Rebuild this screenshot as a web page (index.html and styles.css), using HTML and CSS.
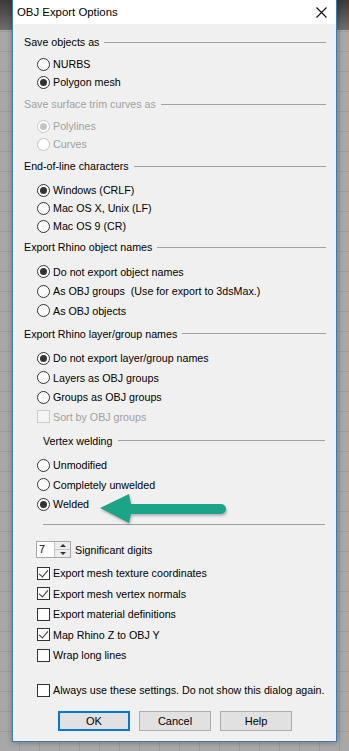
FILE: index.html
```html
<!DOCTYPE html>
<html>
<head>
    <meta charset="utf-8">
    <link rel="stylesheet" href="styles.css">
</head>
<body>
    <div class="dialog">
        <div class="titlebar">
            <span class="title">OBJ Export Options</span>
            <svg class="close-icon" width="11" height="11" viewBox="0 0 11 11">
                <path d="M0.5 0.5 L10.5 10.5 M10.5 0.5 L0.5 10.5" stroke="#111" stroke-width="1.1" fill="none"/>
            </svg>
        </div>

        <div class="dialog-body">
            <div class="group-head">Save objects as</div>
            <div class="options">
                <label class="opt"><span class="radio"></span>NURBS</label>
                <label class="opt"><span class="radio checked"></span>Polygon mesh</label>
            </div>

            <div class="group-head disabled">Save surface trim curves as</div>
            <div class="options">
                <label class="opt disabled"><span class="radio checked"></span>Polylines</label>
                <label class="opt disabled"><span class="radio"></span>Curves</label>
            </div>

            <div class="group-head">End-of-line characters</div>
            <div class="options options-eol">
                <label class="opt"><span class="radio checked"></span>Windows (CRLF)</label>
                <label class="opt"><span class="radio"></span>Mac OS X, Unix (LF)</label>
                <label class="opt"><span class="radio"></span>Mac OS 9 (CR)</label>
            </div>

            <div class="group-head">Export Rhino object names</div>
            <div class="options loose">
                <label class="opt"><span class="radio checked"></span>Do not export object names</label>
                <label class="opt"><span class="radio"></span>As OBJ groups&nbsp; (Use for export to 3dsMax.)</label>
                <label class="opt"><span class="radio"></span>As OBJ objects</label>
            </div>

            <div class="group-head">Export Rhino layer/group names</div>
            <div class="options loose options-layer">
                <label class="opt"><span class="radio checked"></span>Do not export layer/group names</label>
                <label class="opt"><span class="radio"></span>Layers as OBJ groups</label>
                <label class="opt"><span class="radio"></span>Groups as OBJ groups</label>
                <label class="opt disabled"><span class="check"></span>Sort by OBJ groups</label>
            </div>

            <div class="group-head sub">Vertex welding</div>
            <div class="options loose">
                <label class="opt"><span class="radio"></span>Unmodified</label>
                <label class="opt"><span class="radio"></span>Completely unwelded</label>
                <label class="opt"><span class="radio checked"></span>Welded</label>
            </div>

            <div class="separator"></div>

            <div class="spin-row">
                <div class="spin">
                    <span class="spin-value">7</span>
                    <span class="spin-btns">
                        <span class="spin-up"></span>
                        <span class="spin-down"></span>
                    </span>
                </div>
                <span>Significant digits</span>
            </div>

            <div class="checks">
                <label class="opt"><span class="check on"></span>Export mesh texture coordinates</label>
                <label class="opt"><span class="check on"></span>Export mesh vertex normals</label>
                <label class="opt"><span class="check"></span>Export material definitions</label>
                <label class="opt"><span class="check on"></span>Map Rhino Z to OBJ Y</label>
                <label class="opt"><span class="check"></span>Wrap long lines</label>
            </div>

            <label class="opt always"><span class="check"></span>Always use these settings. Do not show this dialog again.</label>

            <div class="buttons">
                <button class="btn default">OK</button>
                <button class="btn">Cancel</button>
                <button class="btn">Help</button>
            </div>
        </div>

        <!-- annotation arrow pointing at "Welded" -->
        <svg class="arrow" width="130" height="34" viewBox="0 0 130 34">
            <path d="M1 16 L30 2 L32 12 H122 A5 5 0 0 1 122 22 H32 L30 31 Z" fill="#1ba485"/>
        </svg>
    </div>
</body>
</html>
```

FILE: styles.css
```css
body {
    margin: 0;
    height: 751px;
    overflow: hidden;
    font-family: "Liberation Sans", Arial, sans-serif;
    font-size: 10.7px;
    color: #000;
    background:
        linear-gradient(#3a3a3a, #6e6e6e) 0 0 / 100% 30px no-repeat,
        repeating-linear-gradient(90deg, transparent 0 19px, rgba(0,0,0,0.08) 19px 20px),
        repeating-linear-gradient(0deg, transparent 0 19px, rgba(0,0,0,0.08) 19px 20px),
        #a8a8a8;
}

.dialog {
    position: relative;
    margin-left: 12px;
    width: 323px;
    height: 741px;
    display: flex;
    flex-direction: column;
    border: 1px solid #3b7cb5;
    border-top: none;
    box-shadow: 0 0 6px rgba(0,0,0,0.35);
}

.titlebar {
    height: 24px;
    background: #fff;
    display: flex;
    align-items: center;
    justify-content: space-between;
    padding: 0 9px 0 4px;
}

.title {
    font-size: 11.4px;
}

.close-icon {
    display: block;
}

.dialog-body {
    flex: 1;
    background: #f0f0f0;
    padding: 10px 10px 0 11px;
}

/* Group headers with the etched line */

.group-head {
    height: 16px;
    display: flex;
    align-items: center;
    gap: 5px;
    white-space: nowrap;
}

.group-head::after {
    content: "";
    flex: 1;
    border-top: 1px solid #a0a0a0;
}

.group-head.sub {
    margin-left: 19px;
    margin-right: 1px;
}

.disabled {
    color: #a0a0a0;
}

.options {
    margin: 5px 0;
    padding-left: 13px;
}

.options-eol {
    margin: 7px 0 4px;
}

.options.loose {
    margin-top: 7px;
}

.options-layer {
    margin-bottom: 6px;
}

.opt {
    height: 18px;
    display: flex;
    align-items: center;
    gap: 3px;
    white-space: nowrap;
}

.options.loose .opt {
    height: 19.5px;
}

/* Radio buttons */

.radio {
    width: 13px;
    height: 13px;
    box-sizing: border-box;
    border: 1px solid #333;
    border-radius: 50%;
    background: #fff;
    display: flex;
    align-items: center;
    justify-content: center;
    flex-shrink: 0;
}

.radio.checked::after {
    content: "";
    width: 7px;
    height: 7px;
    border-radius: 50%;
    background: #333;
}

.opt.disabled .radio {
    border-color: #c4c4c4;
}

.opt.disabled .radio.checked::after {
    background: #c4c4c4;
}

/* Check boxes */

.check {
    width: 13px;
    height: 13px;
    box-sizing: border-box;
    border: 1px solid #333;
    background: #fff;
    flex-shrink: 0;
    position: relative;
}

.check.on::after {
    content: "";
    position: absolute;
    left: 3px;
    top: 0px;
    width: 4px;
    height: 8px;
    border: solid #333;
    border-width: 0 1.3px 1.3px 0;
    transform: rotate(40deg);
}

.opt.disabled .check {
    border-color: #cccccc;
    background: #f4f4f4;
}

.separator {
    margin: 10px 1px 0 19px;
    border-top: 1px solid #a0a0a0;
}

/* Spin box */

.spin-row {
    margin-top: 16px;
    padding-left: 12px;
    display: flex;
    align-items: center;
    gap: 4px;
}

.spin {
    width: 35px;
    height: 17px;
    box-sizing: border-box;
    border: 1px solid #a6a6a6;
    background: #fff;
    display: flex;
}

.spin-value {
    flex: 1;
    padding-left: 2px;
    line-height: 15px;
}

.spin-btns {
    width: 15px;
    display: flex;
    flex-direction: column;
    border-left: 1px solid #c8c8c8;
    background: #ececec;
}

.spin-up, .spin-down {
    flex: 1;
    display: flex;
    align-items: center;
    justify-content: center;
}

.spin-up {
    border-bottom: 1px solid #c8c8c8;
}

.spin-up::after, .spin-down::after {
    content: "";
    border-left: 3px solid transparent;
    border-right: 3px solid transparent;
}

.spin-up::after {
    border-bottom: 3px solid #333;
}

.spin-down::after {
    border-top: 3px solid #333;
}

.checks {
    margin-top: 5px;
    padding-left: 13px;
}

.checks .opt {
    height: 20.5px;
}

.always {
    margin-top: 14.5px;
    padding-left: 13px;
    height: 20px;
}

/* Buttons */

.buttons {
    margin-top: 11px;
    display: flex;
    justify-content: center;
    gap: 9px;
}

.btn {
    width: 72px;
    height: 20px;
    box-sizing: border-box;
    border: 1px solid #adadad;
    background: #e1e1e1;
    font-family: "Liberation Sans", Arial, sans-serif;
    font-size: 11px;
    color: #000;
    padding: 0;
}

.btn.default {
    border: 2px solid #0078d7;
}

.arrow {
    position: absolute;
    left: 86px;
    top: 492px;
    filter: drop-shadow(1px 2px 1px rgba(0,0,0,0.25));
}
```
